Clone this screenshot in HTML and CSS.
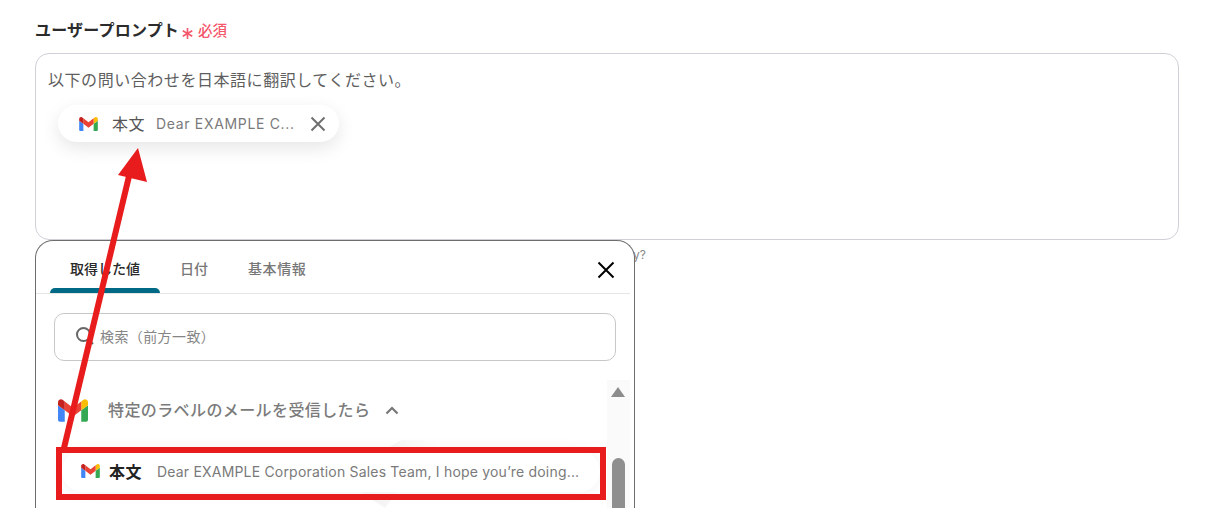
FILE: index.html
```html
<!DOCTYPE html>
<html lang="ja">
<head>
<meta charset="utf-8">
<title>ユーザープロンプト</title>
<link rel="stylesheet" href="styles.css">
</head>
<body>
<svg class="defs" width="0" height="0" aria-hidden="true">
  <symbol id="gmail" viewBox="0 0 24 18">
    <path fill="#4285f4" d="M1.6 18H5.4V8.8L0 4.7V16.4C0 17.3.7 18 1.6 18Z"/>
    <path fill="#34a853" d="M18.6 18H22.4C23.3 18 24 17.3 24 16.4V4.7L18.6 8.8Z"/>
    <path fill="#fbbc04" d="M18.6 1.7V8.8L24 4.7V2.5C24 .5 21.7-.7 20.1.5Z"/>
    <path fill="#ea4335" d="M5.4 8.8V1.7L12 6.7 18.6 1.7V8.8L12 13.8Z"/>
    <path fill="#c5221f" d="M0 2.5V4.7L5.4 8.8V1.7L3.9.5C2.3-.7 0 .5 0 2.5Z"/>
  </symbol>
</svg>
<main class="form">
  <div class="label-row">
    <span class="label">ユーザープロンプト</span>
    <svg class="star" viewBox="0 0 10 10" role="img" aria-label="*"><path d="M5 0V10M.7 2.5 9.3 7.5M9.3 2.5 .7 7.5"/></svg>
    <span class="required">必須</span>
  </div>
  <div class="prompt">
    <p class="prompt-text">以下の問い合わせを日本語に翻訳してください。</p>
    <div class="chip">
      <svg class="chip-icon"><use href="#gmail"/></svg>
      <span class="chip-name">本文</span>
      <span class="chip-value">Dear EXAMPLE C...</span>
      <svg class="chip-close" viewBox="0 0 16 16"><path d="M1.5 1.5 14.5 14.5M14.5 1.5 1.5 14.5"/></svg>
    </div>
  </div>
  <p class="helper">y?</p>

  <section class="panel">
    <div class="tabs">
      <span class="tab tab-active">取得した値</span>
      <span class="tab tab-date">日付</span>
      <span class="tab tab-info">基本情報</span>
      <svg class="panel-close" viewBox="0 0 18 18"><path d="M1.5 1.5 16.5 16.5M16.5 1.5 1.5 16.5"/></svg>
    </div>
    <div class="search">
      <svg class="search-icon" viewBox="0 0 20 20"><circle cx="8.5" cy="8.5" r="6.5"/><path d="M13.5 13.5 18 18"/></svg>
      <span class="search-text">検索（前方一致）</span>
    </div>
    <div class="list">
      <div class="group">
        <svg class="group-icon"><use href="#gmail"/></svg>
        <span class="group-name">特定のラベルのメールを受信したら</span>
        <svg class="group-caret" viewBox="0 0 14 9"><path d="M1.5 7.5 7 2l5.5 5.5"/></svg>
      </div>
      <div class="item">
        <svg class="item-icon"><use href="#gmail"/></svg>
        <span class="item-name">本文</span>
        <span class="item-value">Dear EXAMPLE Corporation Sales Team, I hope you’re doing...</span>
      </div>
      <div class="scrollbar">
        <span class="scroll-up"></span>
        <span class="scroll-thumb"></span>
      </div>
    </div>
  </section>

  <div class="highlight"></div>
  <svg class="arrow" width="1219" height="508" viewBox="0 0 1219 508">
    <path class="arrow-line" d="M64 448 130 172"/>
    <path class="arrow-head" d="M138 148 147 182 118 175Z"/>
  </svg>
</main>
</body>
</html>
```
FILE: styles.css
```css
* { box-sizing: border-box; }
html, body {
  margin: 0;
  height: 508px;
  overflow: hidden;
  background: #fff;
}
body {
  font-family: Inter, "Noto Sans CJK JP", sans-serif;
  color: #333;
}
.defs { position: absolute; }
.form {
  position: relative;
  height: 508px;
  overflow: hidden;
  padding: 19px 40px 0 35px;
}
.label-row {
  display: flex;
  align-items: center;
  height: 20px;
  margin-bottom: 14px;
}
.label {
  font-size: 16px;
  font-weight: 700;
  color: #2b2b2b;
  letter-spacing: .2px;
}
.star {
  width: 11px;
  height: 11px;
  margin: 8px 0 0 3px;
  fill: none;
  stroke: #f4566b;
  stroke-width: 1.5;
}
.required {
  margin-left: 5px;
  margin-top: 1px;
  font-size: 14.5px;
  font-weight: 500;
  color: #f4566b;
}
.prompt {
  height: 187px;
  padding: 14px 12px;
  border: 1px solid #cfd0d8;
  border-radius: 14px;
}
.prompt-text {
  margin: 0;
  font-size: 16px;
  line-height: 24px;
  letter-spacing: .55px;
  color: #5e5e5e;
}
.chip {
  display: flex;
  align-items: center;
  width: 281px;
  height: 37px;
  margin: 13px 0 0 10px;
  padding-left: 21px;
  background: #fff;
  border-radius: 19px;
  box-shadow: 0 6px 18px rgba(0, 0, 0, .1);
}
.chip-icon { width: 19px; height: 14px; }
.chip-name {
  margin-left: 14px;
  margin-top: -2px;
  font-size: 16px;
  letter-spacing: .5px;
  color: #555;
}
.chip-value {
  margin-left: 11px;
  margin-top: -1px;
  font-size: 14px;
  color: #7a7a7a;
  white-space: nowrap;
  letter-spacing: .67px;
}
.chip-close {
  width: 16px;
  height: 16px;
  margin-left: 15px;
  fill: none;
  stroke: #6f6f6f;
  stroke-width: 2;
}
.helper {
  margin: 7px 0 0 598px;
  font-size: 12px;
  line-height: 16px;
  color: #888;
}
.panel {
  position: absolute;
  left: 35px;
  top: 240px;
  width: 600px;
  height: 268px;
  overflow: hidden;
  background: #fff;
  border: 1px solid #6d6d6d;
  border-bottom: 0;
  border-radius: 18px 18px 0 0;
}
.tabs {
  position: relative;
  display: flex;
  height: 53px;
  margin-right: 4px;
  border-bottom: 1px solid #e6e6e6;
}
.tab {
  padding-top: 18px;
  font-size: 14px;
  font-weight: 500;
  line-height: 20px;
  color: #777;
}
.tab-active {
  position: relative;
  width: 110px;
  margin-left: 14px;
  padding-left: 20px;
  color: #2a2a2a;
}
.tab-active::after {
  content: "";
  position: absolute;
  left: 0;
  right: 0;
  bottom: 0;
  height: 5px;
  background: #006a86;
  border-radius: 5px 5px 0 0;
}
.tab-date { margin-left: 20px; }
.tab-info { margin-left: 40px; letter-spacing: .6px; }
.panel-close {
  position: absolute;
  right: 15px;
  top: 20px;
  width: 18px;
  height: 18px;
  fill: none;
  stroke: #000;
  stroke-width: 2;
}
.search {
  display: flex;
  align-items: center;
  height: 48px;
  margin: 19px 18px 0;
  padding-left: 20px;
  border: 1px solid #c8c8c8;
  border-radius: 10px;
}
.search-icon {
  width: 20px;
  height: 20px;
  margin-top: -3px;
  fill: none;
  stroke: #666;
  stroke-width: 2;
}
.search-text {
  margin-left: 5px;
  margin-top: -2px;
  font-size: 14px;
  letter-spacing: .4px;
  color: #858585;
}
.list {
  position: relative;
  margin-top: 19px;
  height: 147px;
  padding-top: 18px;
}
.group {
  display: flex;
  align-items: center;
  height: 24px;
  padding-left: 22px;
}
.group-icon { width: 30px; height: 23px; }
.group-name {
  margin-left: 20px;
  margin-top: -2px;
  font-size: 16px;
  font-weight: 500;
  letter-spacing: .4px;
  color: #7b7b7b;
}
.group-caret {
  width: 14px;
  height: 9px;
  margin-left: 15px;
  fill: none;
  stroke: #777;
  stroke-width: 2.2;
}
.item {
  position: absolute;
  left: 26px;
  top: 70px;
  display: flex;
  align-items: center;
  width: 538px;
  height: 42px;
  padding-left: 19px;
  background: #fff;
  border-radius: 21px;
  box-shadow: 0 0 16px rgba(0, 0, 0, .06);
}
.item::before,
.item::after {
  content: "";
  position: absolute;
  height: 10px;
}
.item::before {
  left: 321px;
  top: -10px;
  width: 54px;
  background: linear-gradient(to right, #f1f1f1, rgba(255, 255, 255, 0));
  clip-path: polygon(0 100%, 35% 0, 100% 0, 100% 100%);
}
.item::after {
  left: 298px;
  bottom: -16px;
  height: 16px;
  width: 36px;
  background: linear-gradient(to right, #f3f3f3, #f6f6f6);
  clip-path: polygon(0 0, 100% 0, 100% 0, 70% 100%);
}
.item-icon { width: 19px; height: 14px; }
.item-name {
  margin-left: 9px;
  font-size: 16px;
  font-weight: 700;
  letter-spacing: .5px;
  color: #222;
}
.item-value {
  margin-left: 15px;
  font-size: 14px;
  color: #7a7a7a;
  white-space: nowrap;
  letter-spacing: .19px;
}
.scrollbar {
  position: absolute;
  left: 571px;
  top: 0;
  width: 23px;
  height: 147px;
  background: #fafafa;
}
.scroll-up {
  position: absolute;
  left: 4px;
  top: 7px;
  width: 0;
  height: 0;
  border-left: 7.5px solid transparent;
  border-right: 7.5px solid transparent;
  border-bottom: 10px solid #8c8c8c;
}
.scroll-thumb {
  position: absolute;
  left: 5px;
  top: 78px;
  width: 13px;
  height: 69px;
  background: #8f8f8f;
  border-radius: 7px 7px 0 0;
}
.highlight {
  position: absolute;
  left: 56px;
  top: 447px;
  width: 550px;
  height: 53px;
  border: 6px solid #e81c1c;
}
.arrow {
  position: absolute;
  left: 0;
  top: 0;
  pointer-events: none;
}
.arrow-line {
  fill: none;
  stroke: #e81c1c;
  stroke-width: 6;
}
.arrow-head { fill: #e81c1c; }
```
